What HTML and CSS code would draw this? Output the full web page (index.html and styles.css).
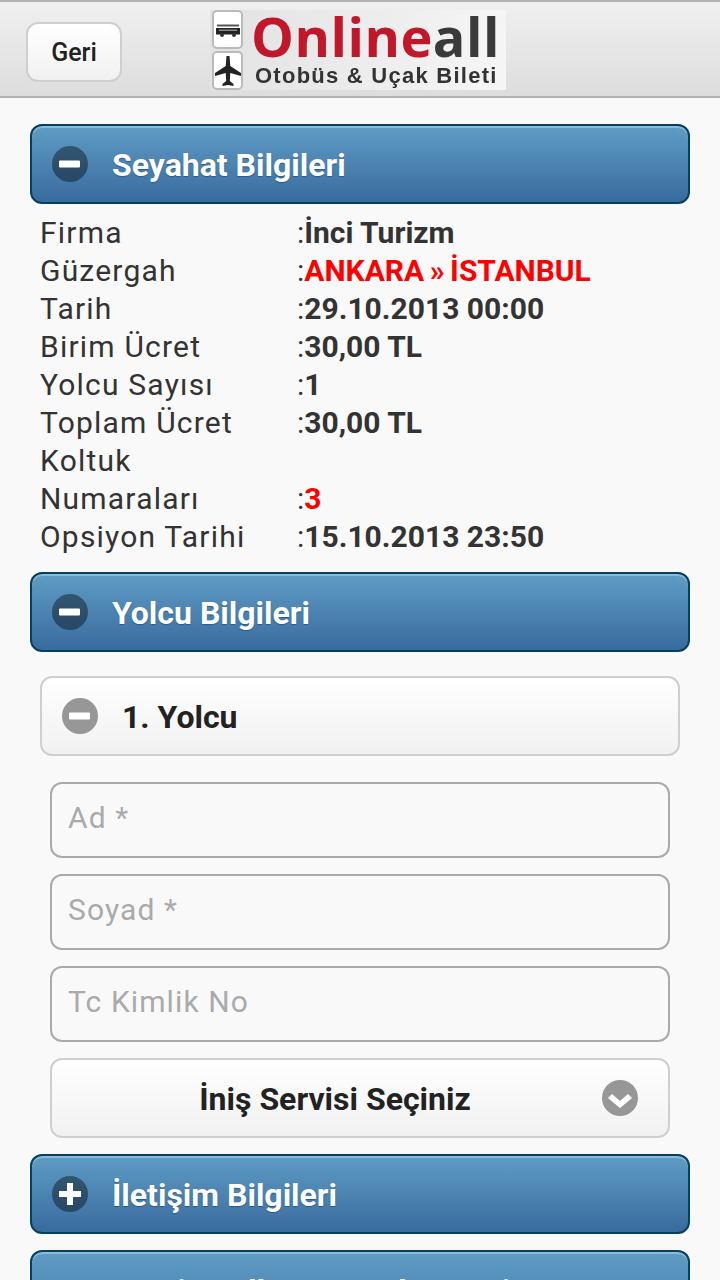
FILE: index.html
```html
<!DOCTYPE html>
<html lang="tr">
<head>
  <meta charset="UTF-8">
  <title>Onlineall - Otobüs &amp; Uçak Bileti</title>
  <link rel="stylesheet" href="styles.css">
</head>
<body>

  <header class="top-bar">
    <button class="back-btn">Geri</button>
    <div class="logo">
      <div class="logo-icons">
        <span class="logo-icon">
          <svg width="26" height="18" viewBox="0 0 26 18"><path d="M2 3.500h22v2H2z" fill="#555"/><path d="M1 7h24v6.500H1z" fill="#222"/><path d="M4 8.500h18v1.500H4z" fill="#888"/><circle cx="7" cy="14" r="2" fill="#333"/><circle cx="19" cy="14" r="2" fill="#333"/></svg>
        </span>
        <span class="logo-icon">
          <svg width="26" height="32" viewBox="0 0 26 32"><path d="M11.500 1h3l.8 10L26 18v3l-10.700-3-.5 8 3.700 3v2l-5.500-1-5.500 1v-2l3.700-3-.5-8L0 21v-3l10.700-7z" fill="#222"/></svg>
        </span>
      </div>
      <div class="logo-text">
        <div class="logo-name"><span class="logo-red">Online</span>all</div>
        <div class="logo-sub">Otobüs &amp; Uçak Bileti</div>
      </div>
    </div>
  </header>

  <main class="content">
    <!-- Seyahat -->
    <h2 class="block-head">
      <span class="round-icon"><svg width="36" height="36" viewBox="0 0 36 36"><rect x="7" y="14.500" width="21" height="7" rx="1" fill="#fff"/></svg></span>
      Seyahat Bilgileri
    </h2>
    <table class="trip-table">
      <tr><td class="lbl">Firma</td><td class="val">:<b>İnci Turizm</b></td></tr>
      <tr><td class="lbl">Güzergah</td><td class="val">:<b class="red route">ANKARA » İSTANBUL</b></td></tr>
      <tr><td class="lbl">Tarih</td><td class="val">:<b>29.10.2013 00:00</b></td></tr>
      <tr><td class="lbl">Birim Ücret</td><td class="val">:<b>30,00 TL</b></td></tr>
      <tr><td class="lbl">Yolcu Sayısı</td><td class="val">:<b>1</b></td></tr>
      <tr><td class="lbl">Toplam Ücret</td><td class="val">:<b>30,00 TL</b></td></tr>
      <tr><td class="lbl">Koltuk Numaraları</td><td class="val bottom">:<b class="red">3</b></td></tr>
      <tr><td class="lbl">Opsiyon Tarihi</td><td class="val">:<b>15.10.2013 23:50</b></td></tr>
    </table>

    <!-- Yolcu -->
    <h2 class="block-head">
      <span class="round-icon"><svg width="36" height="36" viewBox="0 0 36 36"><rect x="7" y="14.500" width="21" height="7" rx="1" fill="#fff"/></svg></span>
      Yolcu Bilgileri
    </h2>
    <div class="passenger">
      <h3 class="sub-head">
        <span class="round-icon gray"><svg width="36" height="36" viewBox="0 0 36 36"><rect x="7" y="14.500" width="21" height="7" rx="1" fill="#fff"/></svg></span>
        1. Yolcu
      </h3>
      <form class="pass-form">
        <input type="text" placeholder="Ad *">
        <input type="text" placeholder="Soyad *">
        <input type="text" placeholder="Tc Kimlik No">
        <div class="select-btn">
          İniş Servisi Seçiniz
          <span class="round-icon gray select-arrow"><svg width="36" height="36" viewBox="0 0 36 36"><path d="M6 18l4-4 8 7 8-7 4 4-12 10z" fill="#fff"/></svg></span>
        </div>
      </form>
    </div>

    <!-- Kapali bloklar -->
    <h2 class="block-head">
      <span class="round-icon"><svg width="36" height="36" viewBox="0 0 36 36"><path d="M15 7h6v8h8v6h-8v8h-6v-8H7v-6h8z" fill="#fff"/></svg></span>
      İletişim Bilgileri
    </h2>
    <h2 class="block-head">
      <span class="round-icon"><svg width="36" height="36" viewBox="0 0 36 36"><path d="M15 7h6v8h8v6h-8v8h-6v-8H7v-6h8z" fill="#fff"/></svg></span>
      Servis Kullanım Sözleşmesi ve Onay Metni
    </h2>
  </main>

</body>
</html>
```

FILE: styles.css
```css
* {
  box-sizing: border-box;
}
html, body {
  height: 1280px;
  overflow: hidden;
}
body {
  margin: 0;
  font-family: Roboto, sans-serif;
  font-size: 30px;
  color: #333;
  background-color: #f9f9f9;
}
/* Header */
.top-bar {
  height: 98px;
  display: flex;
  align-items: center;
  padding-left: 26px;
  border-top: 2px solid #b3b3b3;
  border-bottom: 2px solid #b3b3b3;
  background: linear-gradient(#f0f0f0, #dddddd);
}
.back-btn {
  width: 96px;
  height: 60px;
  margin-top: 6px;
  padding: 0;
  font-family: Roboto, sans-serif;
  font-size: 25px;
  font-weight: 500;
  color: #222;
  border: 2px solid #cfcfcf;
  border-radius: 12px;
  background: linear-gradient(#ffffff, #f1f1f1);
}
.logo {
  width: 296px;
  height: 80px;
  margin-left: 88px;
  margin-top: 2px;
  display: flex;
  gap: 8px;
  padding-left: 2px;
  background: linear-gradient(100deg, #e2e2e2, #f6f6f6);
  filter: blur(0.7px);
}
.logo-icons {
  display: flex;
  flex-direction: column;
  gap: 2px;
}
.logo-icon {
  width: 31px;
  height: 39px;
  display: flex;
  align-items: center;
  justify-content: center;
  background: #fff;
  border: 2px solid #bbb;
  border-radius: 5px;
}
.logo-text {
  display: flex;
  flex-direction: column;
}
.logo-name {
  font-family: "Open Sans", sans-serif;
  font-size: 54px;
  font-weight: 700;
  line-height: 52px;
  letter-spacing: 0.5px;
  color: #3a3a3a;
}
.logo-red {
  color: #c0182a;
}
.logo-sub {
  margin: 2px 0 0 4px;
  font-family: "Liberation Sans", sans-serif;
  font-size: 22px;
  font-weight: 700;
  line-height: 24px;
  letter-spacing: 1.25px;
  color: #333;
}
/* Content */
.content {
  padding: 26px 30px 0;
}
.block-head {
  margin: 0 0 16px;
  padding: 20px 40px 18px 20px;
  display: flex;
  align-items: center;
  gap: 24px;
  font-size: 32px;
  font-weight: 700;
  line-height: 38px;
  color: #fff;
  text-shadow: 0 1px 1px #2c5a85;
  border: 2px solid #044062;
  border-radius: 12px;
  background: linear-gradient(#5f9cc5, #396b9e);
  box-shadow: inset 0 2px 0 rgba(255,255,255,0.3);
}
.round-icon {
  width: 36px;
  height: 36px;
  flex: none;
  margin-top: -2px;
  border-radius: 50%;
  background-color: rgba(0,0,0,0.4);
}
.round-icon svg {
  display: block;
}
.round-icon.gray {
  background-color: #979797;
}
/* Seyahat tablosu */
.trip-table {
  width: 640px;
  margin: -6px 10px 16px;
  border-collapse: collapse;
  table-layout: fixed;
}
.trip-table td {
  padding: 0;
  line-height: 38px;
  vertical-align: top;
}
.trip-table td.lbl {
  width: 257px;
  padding-right: 10px;
  letter-spacing: 1.2px;
}
.trip-table td.bottom {
  vertical-align: bottom;
}
.red {
  color: #ff0000;
}
.route {
  word-spacing: -2px;
}
/* Yolcu formu */
.passenger {
  padding: 8px 10px 0;
}
.sub-head {
  margin: 0 0 26px;
  padding: 20px 20px 18px;
  display: flex;
  align-items: center;
  gap: 24px;
  font-size: 32px;
  font-weight: 700;
  line-height: 38px;
  color: #222;
  border: 2px solid #cfcfcf;
  border-radius: 12px;
  background: linear-gradient(#ffffff, #f1f1f1);
}
.pass-form {
  padding: 0 10px;
  display: flex;
  flex-direction: column;
  gap: 16px;
}
.pass-form input {
  height: 76px;
  padding: 0 16px 6px;
  font-family: Roboto, sans-serif;
  font-size: 30px;
  letter-spacing: 1.1px;
  color: #333;
  background-color: #f9f9f9;
  border: 2px solid #aaa;
  border-radius: 12px;
}
.pass-form input::placeholder {
  color: #aaa;
}
.select-btn {
  position: relative;
  height: 80px;
  margin-bottom: 16px;
  padding: 2px 50px 0 0;
  display: flex;
  align-items: center;
  justify-content: center;
  font-size: 32px;
  font-weight: 700;
  color: #222;
  border: 2px solid #cfcfcf;
  border-radius: 12px;
  background: linear-gradient(#ffffff, #f1f1f1);
}
.select-arrow {
  position: absolute;
  right: 30px;
  top: 20px;
  margin-top: 0;
}
```
